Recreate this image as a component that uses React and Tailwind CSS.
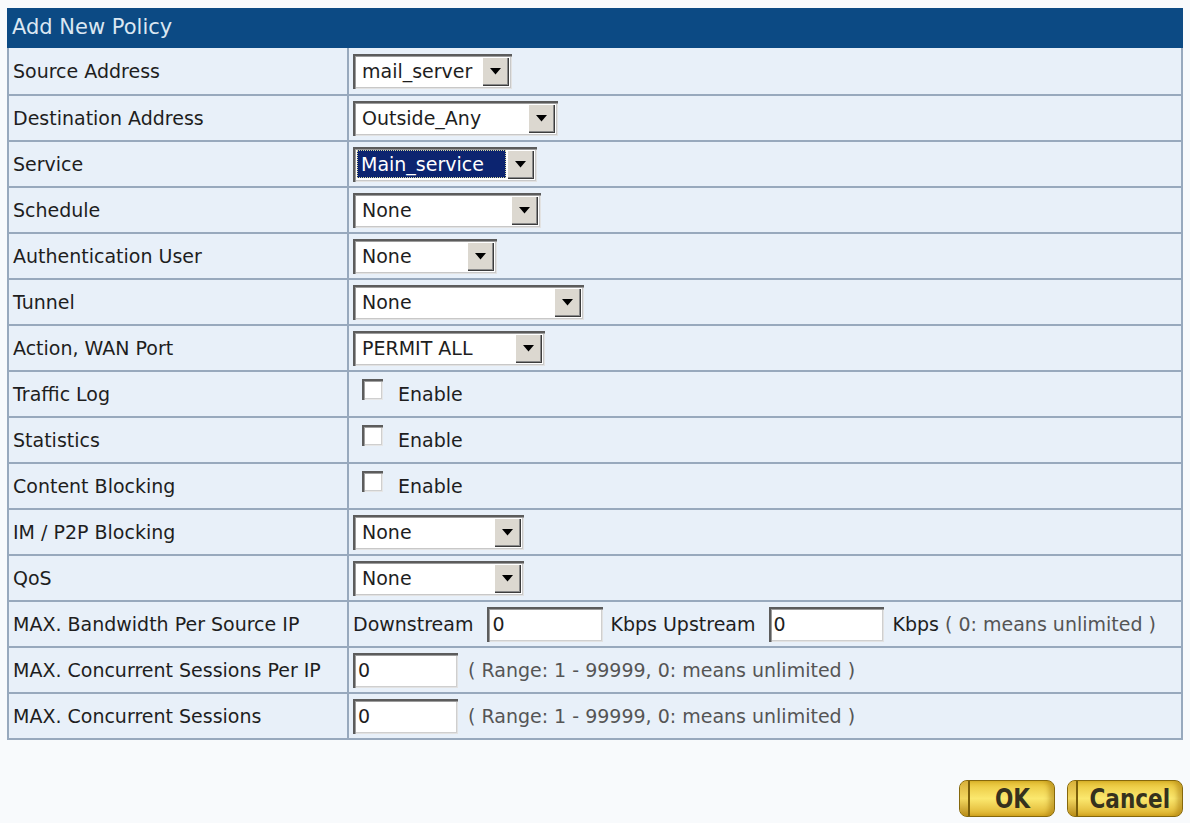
import React from "react";

// Sunken Windows-classic style drop-down box
function Select({ value, w, focused = false }) {
  return (
    <div
      className={`flex h-[35px] ${w} bg-white p-[3px] shadow-[inset_2px_2px_0_#5c5c5c,inset_3px_3px_0_#9c9c9c,inset_-1px_-1px_0_#e2e2e2,inset_-2px_-2px_0_#c8c8c8]`}
    >
      <div className="flex flex-1 items-center overflow-hidden">
        {focused ? (
          <span className="mx-[1px] flex h-[28px] flex-1 items-center bg-[#0c2470] pl-[4px] text-white outline-1 outline-dotted outline-[#d8d8a0] -outline-offset-1">
            {value}
          </span>
        ) : (
          <span className="pl-[6px]">{value}</span>
        )}
      </div>
      <div className="flex w-[27px] items-center justify-center bg-[#dcd8d0] shadow-[inset_1px_1px_0_#ffffff,inset_-1px_-1px_0_#3c3c3c,inset_-2px_-2px_0_#8a8a8a]">
        <svg width="11" height="7" viewBox="0 0 11 7">
          <path d="M0 0 H11 L5.5 6.5 Z" fill="#000" />
        </svg>
      </div>
    </div>
  );
}

// Sunken text field
function TextBox({ w, value = "0" }) {
  return (
    <div
      className={`flex h-[35px] ${w} items-center bg-white pl-[5px] shadow-[inset_2px_2px_0_#5c5c5c,inset_3px_3px_0_#9c9c9c,inset_-1px_-1px_0_#e2e2e2,inset_-2px_-2px_0_#cfcfcf]`}
    >
      {value}
    </div>
  );
}

function Check() {
  return (
    <div className="flex items-center">
      <div className="mb-[9px] ml-[9px] h-[21px] w-[21px] bg-white shadow-[inset_2px_2px_0_#5c5c5c,inset_3px_3px_0_#a0a0a0,inset_-1px_-1px_0_#e6e6e6,inset_-2px_-2px_0_#cfcfcf]" />
      <span className="ml-[15px]">Enable</span>
    </div>
  );
}

// Gold capsule button
function GoldButton({ label, w }) {
  return (
    <div
      className={`flex h-[37px] ${w} overflow-hidden rounded-[8px] border border-[#86680c] bg-gradient-to-b from-[#e7c233] via-[#fbe86e] to-[#ddb126] shadow-[inset_-5px_0_5px_rgba(150,105,0,0.45)]`}
    >
      <div className="w-[10px] border-r-2 border-[#7a5e0a] bg-gradient-to-b from-[#d9b03a] via-[#f3d860] to-[#b98c12]" />
      <div className="flex flex-1 items-center justify-center">
        <span className="inline-block scale-x-[0.9] scale-y-[1.08] font-['DejaVu_Sans',sans-serif] text-[24px] font-bold text-[#35311d]">
          {label}
        </span>
      </div>
    </div>
  );
}

function Row({ label, children }) {
  return (
    <div className="flex h-[46px] border-t-2 border-[#98a9bd] first:border-t-0">
      <div className="flex w-[340px] shrink-0 items-center border-r-2 border-[#98a9bd] pl-[4px]">
        {label}
      </div>
      <div className="flex flex-1 items-center pl-[4px]">{children}</div>
    </div>
  );
}

const selectRows = [
  { label: "Source Address", value: "mail_server", w: "w-[159px]" },
  { label: "Destination Address", value: "Outside_Any", w: "w-[205px]" },
  { label: "Service", value: "Main_service", w: "w-[184px]", focused: true },
  { label: "Schedule", value: "None", w: "w-[188px]" },
  { label: "Authentication User", value: "None", w: "w-[144px]" },
  { label: "Tunnel", value: "None", w: "w-[231px]" },
  { label: "Action, WAN Port", value: "PERMIT ALL", w: "w-[192px]" },
];

export default function App() {
  return (
    <div className="min-h-[823px] w-[1190px] bg-[#f8fafc] px-[7px] pt-[8px] font-['DejaVu_Sans',sans-serif] text-[19px] text-[#1e1e1e]">
      <div className="w-[1176px]">
        <div className="flex h-[40px] items-center bg-[#0c4a84] pl-[5px] text-[21px] text-[#dbe7f2]">
          Add New Policy
        </div>
        <div className="border-x-2 border-b-2 border-[#98a9bd] bg-[#e8f0f9]">
          {selectRows.map((r) => (
            <Row key={r.label} label={r.label}>
              <Select value={r.value} w={r.w} focused={r.focused} />
            </Row>
          ))}
          <Row label="Traffic Log">
            <Check />
          </Row>
          <Row label="Statistics">
            <Check />
          </Row>
          <Row label="Content Blocking">
            <Check />
          </Row>
          <Row label="IM / P2P Blocking">
            <Select value="None" w="w-[171px]" />
          </Row>
          <Row label="QoS">
            <Select value="None" w="w-[171px]" />
          </Row>
          <Row label="MAX. Bandwidth Per Source IP">
            <span>Downstream</span>
            <div className="ml-[14px]">
              <TextBox w="w-[116px]" />
            </div>
            <span className="ml-[7px]">Kbps Upstream</span>
            <div className="ml-[13px]">
              <TextBox w="w-[115px]" />
            </div>
            <span className="ml-[9px]">
              Kbps <span className="text-[#555]">( 0: means unlimited )</span>
            </span>
          </Row>
          <Row label="MAX. Concurrent Sessions Per IP">
            <TextBox w="w-[105px]" />
            <span className="ml-[10px] text-[#555]">( Range: 1 - 99999, 0: means unlimited )</span>
          </Row>
          <Row label="MAX. Concurrent Sessions">
            <TextBox w="w-[105px]" />
            <span className="ml-[10px] text-[#555]">( Range: 1 - 99999, 0: means unlimited )</span>
          </Row>
        </div>
        <div className="mt-[40px] flex justify-end gap-[12px]">
          <GoldButton label="OK" w="w-[96px]" />
          <GoldButton label="Cancel" w="w-[116px]" />
        </div>
      </div>
    </div>
  );
}
